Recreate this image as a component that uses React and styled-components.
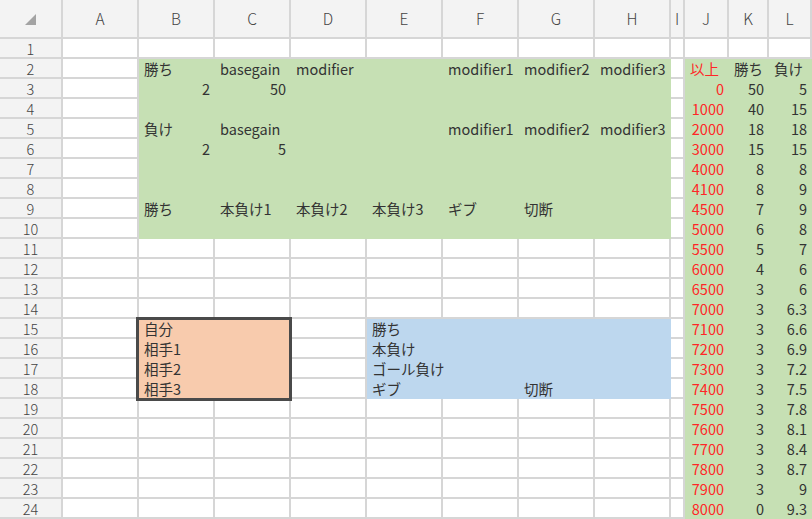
import React from 'react'
import styled, { createGlobalStyle } from 'styled-components'

const GRID = '#d6d6d6'
const FILLS = {
    green: '#c6e0b4',
    orange: '#f8cbad',
    blue: '#bdd7ee',
}

const COLS = ['A', 'B', 'C', 'D', 'E', 'F', 'G', 'H', 'I', 'J', 'K', 'L']
const WIDTHS = [76, 76, 76, 76, 76, 76, 76, 76, 14, 44, 40, 43]

const table = [
    [0, 50, 5], [1000, 40, 15], [2000, 18, 18], [3000, 15, 15], [4000, 8, 8],
    [4100, 8, 9], [4500, 7, 9], [5000, 6, 8], [5500, 5, 7], [6000, 4, 6],
    [6500, 3, 6], [7000, 3, 6.3], [7100, 3, 6.6], [7200, 3, 6.9], [7300, 3, 7.2],
    [7400, 3, 7.5], [7500, 3, 7.8], [7600, 3, 8.1], [7700, 3, 8.4], [7800, 3, 8.7],
    [7900, 3, 9], [8000, 0, 9.3],
]

// text cells: "row:col" -> value
const cells = {
    '2:B': '勝ち', '2:C': 'basegain', '2:D': 'modifier', '2:F': 'modifier1', '2:G': 'modifier2', '2:H': 'modifier3',
    '2:J': '以上', '2:K': '勝ち', '2:L': '負け',
    '3:B': 2, '3:C': 50,
    '5:B': '負け', '5:C': 'basegain', '5:F': 'modifier1', '5:G': 'modifier2', '5:H': 'modifier3',
    '6:B': 2, '6:C': 5,
    '9:B': '勝ち', '9:C': '本負け1', '9:D': '本負け2', '9:E': '本負け3', '9:F': 'ギブ', '9:G': '切断',
    '15:B': '自分', '16:B': '相手1', '17:B': '相手2', '18:B': '相手3',
    '15:E': '勝ち', '16:E': '本負け', '17:E': 'ゴール負け', '18:E': 'ギブ', '18:G': '切断',
}
table.forEach((r, i) => {
    cells[`${i + 3}:J`] = r[0]
    cells[`${i + 3}:K`] = r[1]
    cells[`${i + 3}:L`] = r[2]
})

const fillOf = (row, ci) => {
    if (ci >= 9 && row >= 2) return 'green'
    if (ci >= 1 && ci <= 7 && row >= 2 && row <= 10) return 'green'
    if (ci >= 1 && ci <= 2 && row >= 15 && row <= 18) return 'orange'
    if (ci >= 4 && ci <= 7 && row >= 15 && row <= 18) return 'blue'
    return null
}

const GlobalStyle = createGlobalStyle`
    html, body {
        margin: 0;
        padding: 0;
        background: #fff;
        overflow: hidden;
    }
    body {
        font-family: "Noto Sans CJK JP", "Noto Sans", sans-serif;
    }
`

const Sheet = styled.div`
    display: grid;
    grid-template-columns: 63px ${WIDTHS.map(w => `${w}px`).join(' ')};
    grid-template-rows: 39px repeat(24, 20px);
    width: 812px;
    height: 519px;
    overflow: hidden;
    font-size: 14.5px;
    color: #333;
`

const Head = styled.div`
    grid-row: ${p => p.$r};
    grid-column: ${p => p.$c};
    background: #f3f3f3;
    border-right: 2px solid ${GRID};
    border-bottom: 2px solid ${GRID};
    box-sizing: border-box;
    display: flex;
    align-items: center;
    justify-content: center;
    color: #444;
    font-weight: 300;
`

const Corner = styled(Head)`
    align-items: flex-end;
    justify-content: flex-end;
    padding: 0 25px 12px 0;
`

const ColHead = styled(Head)`
    padding-bottom: 2px;
    font-size: 15.5px;
`

const RowHead = styled(Head)`
    font-size: 14.5px;
    line-height: 18px;
    padding-top: 1px;
`

const Cell = styled.div`
    grid-row: ${p => p.$r};
    grid-column: ${p => p.$c};
    box-sizing: border-box;
    background: ${p => (p.$fill ? FILLS[p.$fill] : '#fff')};
    border-right: 2px solid ${p => (p.$fill ? FILLS[p.$fill] : GRID)};
    border-bottom: 2px solid ${p => (p.$fill ? FILLS[p.$fill] : GRID)};
    display: flex;
    align-items: center;
    justify-content: ${p => (p.$right ? 'flex-end' : 'flex-start')};
    padding: 1px 3px 0 5px;
    line-height: 18px;
    white-space: nowrap;
    min-width: 0;
`

const Value = styled.span`
    position: relative;
    z-index: 1;
    color: ${p => (p.$red ? '#ff2626' : 'inherit')};
`

const RangeBorder = styled.div`
    grid-column: 3 / 5;
    grid-row: 16 / 20;
    margin: -2px -1px -2px -3px;
    border: 3px solid #4a4a4a;
    z-index: 2;
    pointer-events: none;
`

const Triangle = () => (
    <svg width="11" height="11" viewBox="0 0 11 11">
        <polygon points="11,0 11,11 0,11" fill="#a3a3a3" />
    </svg>
)

const App = () => {
    const rows = Array.from({ length: 24 }, (_, i) => i + 1)
    return (
        <Sheet>
            <GlobalStyle />
            <Corner $r={1} $c={1}><Triangle /></Corner>
            {COLS.map((c, ci) => <ColHead key={c} $r={1} $c={ci + 2}>{c}</ColHead>)}
            {rows.map(r => (
                <React.Fragment key={r}>
                    <RowHead $r={r + 1} $c={1}>{r}</RowHead>
                    {COLS.map((c, ci) => {
                        const v = cells[`${r}:${c}`]
                        const isNum = typeof v === 'number'
                        return (
                            <Cell key={c} $r={r + 1} $c={ci + 2} $fill={fillOf(r, ci)} $right={isNum}>
                                {v !== undefined && <Value $red={c === 'J'}>{v}</Value>}
                            </Cell>
                        )
                    })}
                </React.Fragment>
            ))}
            <RangeBorder />
        </Sheet>
    )
}

export default App
